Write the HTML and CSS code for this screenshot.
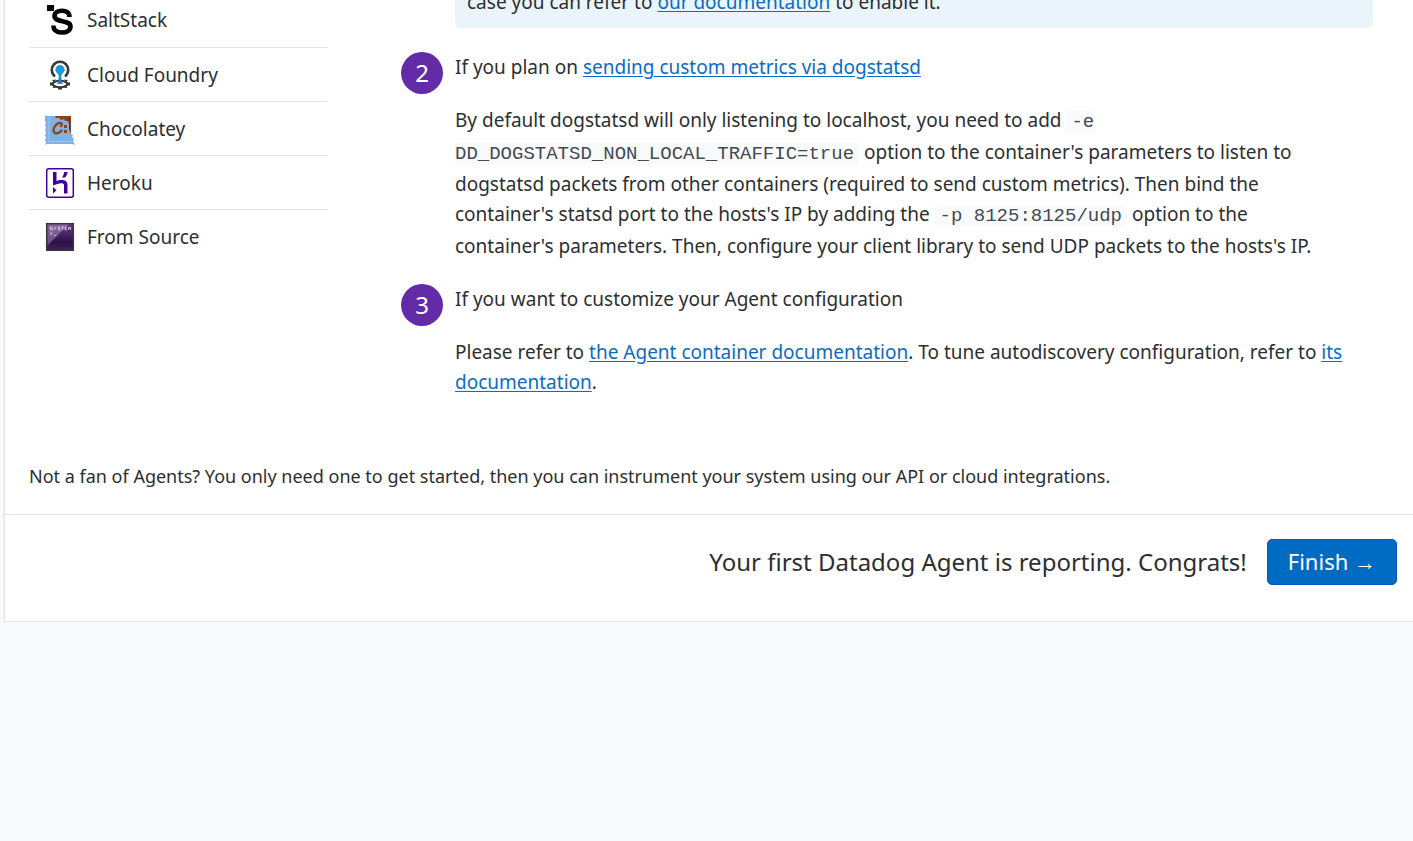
FILE: index.html
```html
<!DOCTYPE html>
<html lang="en">
<head>
<meta charset="utf-8">
<title>Agent Setup</title>
<link rel="stylesheet" href="styles.css">
</head>
<body>
<main class="panel">
  <div class="content">
    <nav class="platforms" aria-label="Platforms">
      <a class="platform" href="#saltstack">
        <svg class="platform-icon" viewBox="0 0 32 32" aria-hidden="true"><path d="M3 1h7v6H3z"/><path d="M25.500 13C25.500 8.500 22 6.800 18 6.800C13.500 6.800 10.500 8.500 10.500 12C10.500 19 26.500 15.500 26.500 22.500C26.500 26.500 22.500 28.500 18 28.500C13 28.500 9.500 26.500 9.300 21.500" fill="none" stroke="#000" stroke-width="4.600"/></svg>
        SaltStack
      </a>
      <a class="platform" href="#cloud-foundry">
        <svg class="platform-icon" viewBox="0 0 32 32" aria-hidden="true"><path d="M11 17.500a8.200 8.200 0 1 1 10 0" fill="none" stroke="#353a3b" stroke-width="2.600"/><ellipse cx="16" cy="25" rx="7.500" ry="3.200" fill="none" stroke="#353a3b" stroke-width="2"/><path d="M14 27.500h4v3h-4zM6 23.500h4v3H6zM22 23.500h4v3h-4zM8 21l4-.500-2 3zM24 21l-4-.500 2 3zM8.500 29l4-.500-2-3zM23.500 29l-4-.500 2-3z" fill="#353a3b"/><path d="M16 6a4.700 4.700 0 0 0-4.700 4.700c0 2.500 3.100 4 3.300 5.800l.2 6.500q-1.300.500-2 1.800h6.400q-.700-1.300-2-1.800l.2-6.500c.2-1.800 3.300-3.300 3.300-5.800A4.700 4.700 0 0 0 16 6z" fill="#1d9cdb"/><path d="M14.800 19h2.400v4l2 1.800h-6.400l2-1.800z" fill="#3f73b8"/></svg>
        Cloud Foundry
      </a>
      <a class="platform" href="#chocolatey">
        <svg class="platform-icon" viewBox="0 0 32 32" aria-hidden="true"><path d="M5 3h22v26H5z" fill="#8a4319"/><path d="M24 5h2v15h-2z" fill="#6f3011"/><path d="M1 2l2 1h8l1 2 3 0 2 2 3-1 1 2 3 0 1 3 0 5 1 3 1 2 2 1-1 2 2 2-1 2 2 4-3-1H3l-2 1 1-3-1-2 1-2-1-3 1-2-1-3 1-2-1-3 1-2-1-2z" fill="#7fb2e2"/><path d="M5 4v24M5 28.500h22" stroke="#a4c9ec"/><path d="M18 11c-1-2-4-1-6 1-2 2-3 5-2 7 1 2 5 2 8-2M18 10l-1 4" fill="none" stroke="#8d4518" stroke-width="2.400"/><path d="M20 12h3v3h-3zM20 17h3v3h-3z" fill="#8d4518"/></svg>
        Chocolatey
      </a>
      <a class="platform" href="#heroku">
        <svg class="platform-icon" viewBox="0 0 32 32" aria-hidden="true"><rect x="2.700" y="1.700" width="26.600" height="28.600" rx="2" fill="#fff" stroke="#430098" stroke-width="1.500"/><path d="M9 5h3.500v9c4-1.500 11-2 11 4v8.500H20V18c0-3-6-2-11 .500zM20 5h3.500c0 2-1 4-2.500 5.500h-3C19.200 9 20 7 20 5zM9 20l3.500 3.200L9 26.500z" fill="#430098"/></svg>
        Heroku
      </a>
      <a class="platform" href="#source">
        <svg class="platform-icon" viewBox="0 0 32 32" aria-hidden="true"><defs><linearGradient id="screen" x1="0" y1="0" x2="0" y2="1"><stop offset="0" stop-color="#6b3b86"/><stop offset=".7" stop-color="#2a1247"/><stop offset="1" stop-color="#3c2356"/></linearGradient></defs><rect x="2.700" y="2.700" width="26.600" height="26.600" fill="url(#screen)" stroke="#39363c" stroke-width="1.500"/><path d="M3.500 3.500h21l-21 21z" fill="#b79cc8" opacity=".45"/><path d="M6 6h2.500M6 6v1.500h2.500V9H6M10 6l1 1.500 1-1.500M11 7.500V9M16 6h-2v1.500h2V9h-2M17 6h3M18.500 6v3M23 6h-2v3h2M21 7.500h1.500M24.500 9V6l1 1.500 1-1.500v3M6 11l2.500 1.500L6 14M10 14.500h2.500" fill="none" stroke="#d9cce3" stroke-width=".8"/></svg>
        From Source
      </a>
    </nav>
    <div class="steps">
      <p class="callout">case you can refer to <a href="#docs">our documentation</a> to enable it.</p>
      <section class="step">
        <span class="step-number">2</span>
        <div class="step-body">
          <p>If you plan on <a href="#metrics">sending custom metrics via dogstatsd</a></p>
          <p>By default dogstatsd will only listening to localhost, you need to add <code>-e DD_DOGSTATSD_NON_LOCAL_TRAFFIC=true</code> option to the container's parameters to listen to dogstatsd packets from other containers (required to send custom metrics). Then bind the<br>container's statsd port to the hosts's IP by adding the <code>-p 8125:8125/udp</code> option to the<br>container's parameters. Then, configure your client library to send UDP packets to the hosts's IP.</p>
        </div>
      </section>
      <section class="step">
        <span class="step-number">3</span>
        <div class="step-body">
          <p>If you want to customize your Agent configuration</p>
          <p>Please refer to <a href="#agent">the Agent container documentation</a>. To tune autodiscovery configuration, refer to <a href="#autodiscovery">its documentation</a>.</p>
        </div>
      </section>
    </div>
  </div>
  <p class="note">Not a fan of Agents? You only need one to get started, then you can instrument your system using our API or cloud integrations.</p>
  <footer class="footer">
    <p class="status">Your first Datadog Agent is reporting. Congrats!</p>
    <button class="finish" type="button">Finish →</button>
  </footer>
</main>
</body>
</html>
```
FILE: styles.css
```css
* { box-sizing: border-box; }
html { overflow: hidden; }
body {
  margin: 0;
  background: #f9fafc;
  color: #2b2f33;
  font: 19px/30px "Noto Sans", sans-serif;
}
p { margin: 0; }
a { color: #0b6bc4; text-underline-offset: 2px; }
.panel {
  display: flow-root;
  margin-left: 4px;
  background: #fff;
  border: solid #e2e1ec;
  border-width: 0 0 1px 1px;
  box-shadow: 0 0 1px 1px #f0f0f6;
}
.content {
  display: grid;
  grid-template-columns: 299px 1fr;
  gap: 73px;
  margin-top: -7px;
  padding: 0 40px 0 24px;
}
.platform {
  display: flex;
  align-items: center;
  gap: 11px;
  height: 54px;
  padding-left: 15px;
  color: inherit;
  text-decoration: none;
}
.platform + .platform { border-top: 1px solid #e2e1ec; }
.platform-icon { width: 32px; height: 32px; }
.callout {
  margin: -14px 0 24px 54px;
  padding: 8px 12px 11px;
  background: #e9f4fb;
  border-radius: 6px;
}
.step {
  display: grid;
  grid-template-columns: 42px 1fr;
  gap: 12px;
  margin-bottom: 23px;
}
.step-number {
  display: grid;
  place-items: center;
  width: 42px;
  height: 42px;
  border-radius: 50%;
  background: #632ca6;
  color: #fff;
  font-size: 24px;
}
.step-body p + p { margin-top: 23px; }
code {
  padding: 0 5px;
  background: #f9fafc;
  color: #444a52;
  font: 19px/30px "Liberation Mono", monospace;
}
.note { margin: 41px 24px 23px; font-size: 18px; }
.footer {
  display: flex;
  justify-content: flex-end;
  align-items: center;
  gap: 20px;
  padding: 24px 16px 36px;
  border-top: 1px solid #e2e1ec;
}
.status { font-size: 24px; }
.finish {
  padding: 6px 20px 8px;
  border: 1px solid #0059b8;
  border-radius: 5px;
  background: #006bc2;
  color: #fff;
  font: 22px/30px "Noto Sans", sans-serif;
}
```
